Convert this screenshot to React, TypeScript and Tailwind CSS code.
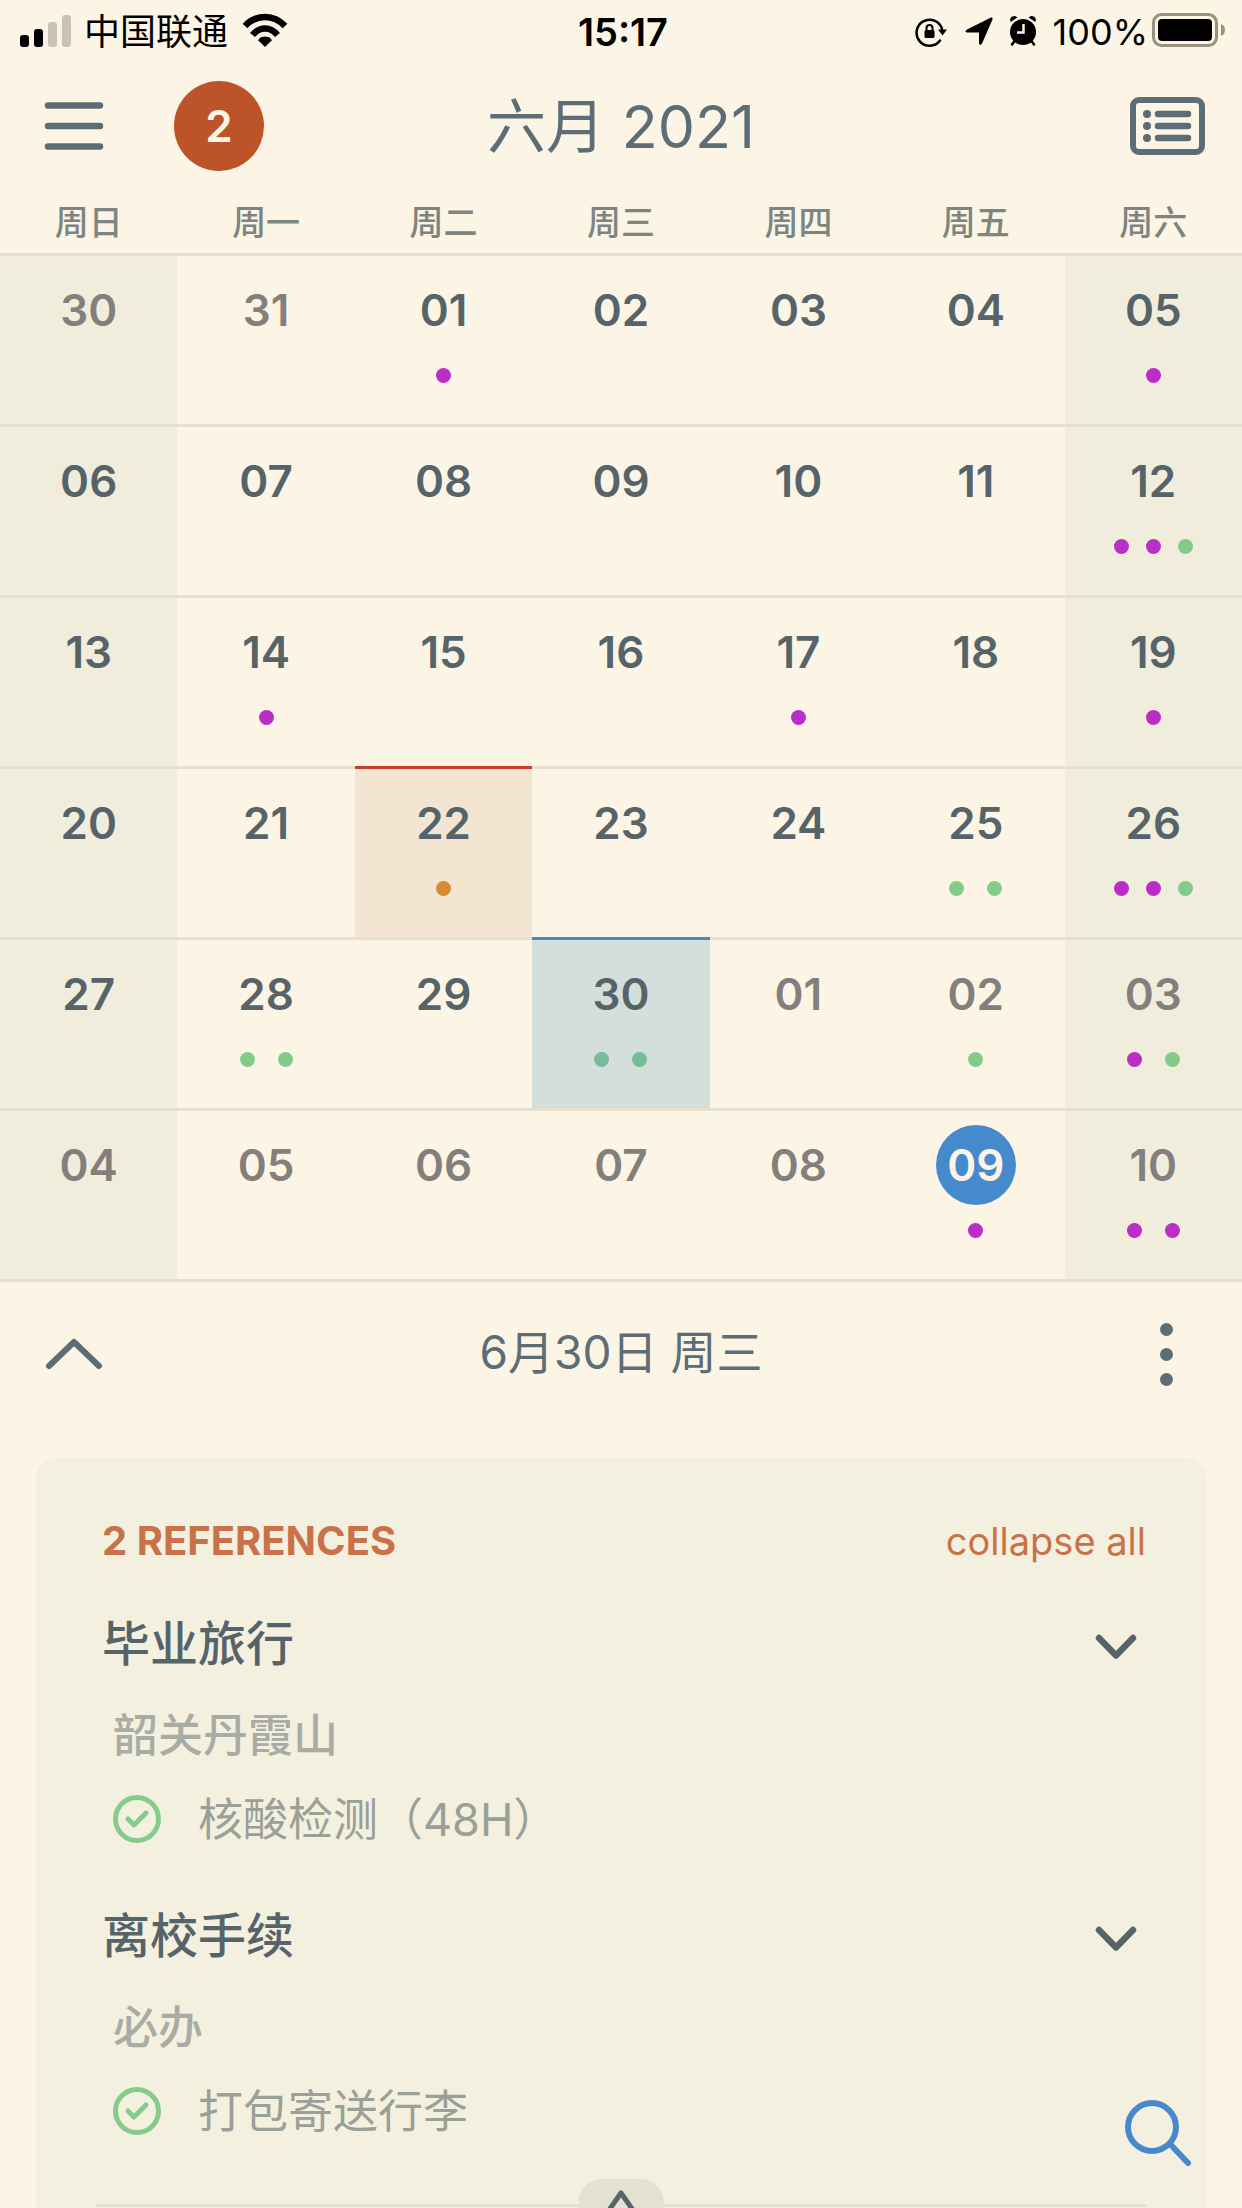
import React from "react";

type Tone = "purple" | "green" | "orange" | "teal";
type Day = { label: string; dots?: Tone[]; muted?: boolean; kind?: "today" | "selected" | "flagged" };

const dotTone: Record<Tone, string> = {
  purple: "bg-[#ba2dc7]",
  green: "bg-[#84cb89]",
  orange: "bg-[#d78a34]",
  teal: "bg-[#77bb98]",
};

const weekdays = ["周日", "周一", "周二", "周三", "周四", "周五", "周六"];

const d = (label: string, dots: Tone[] = [], extra: Partial<Day> = {}): Day => ({ label, dots, ...extra });
const m = (label: string, dots: Tone[] = [], extra: Partial<Day> = {}): Day => ({ label, dots, muted: true, ...extra });

const weeks: Day[][] = [
  [m("30"), m("31"), d("01", ["purple"]), d("02"), d("03"), d("04"), d("05", ["purple"])],
  [d("06"), d("07"), d("08"), d("09"), d("10"), d("11"), d("12", ["purple", "purple", "green"])],
  [d("13"), d("14", ["purple"]), d("15"), d("16"), d("17", ["purple"]), d("18"), d("19", ["purple"])],
  [
    d("20"),
    d("21"),
    d("22", ["orange"], { kind: "flagged" }),
    d("23"),
    d("24"),
    d("25", ["green", "green"]),
    d("26", ["purple", "purple", "green"]),
  ],
  [
    d("27"),
    d("28", ["green", "green"]),
    d("29"),
    d("30", ["teal", "teal"], { kind: "selected" }),
    m("01"),
    m("02", ["green"]),
    m("03", ["purple", "green"]),
  ],
  [m("04"), m("05"), m("06"), m("07"), m("08"), m("09", ["purple"], { kind: "today" }), m("10", ["purple", "purple"])],
];

function StatusBar() {
  return (
    <div className="grid h-16 shrink-0 grid-cols-[1fr_auto_1fr] items-center pr-4 pl-5 text-black">
      <div className="flex items-center">
        <svg className="mr-3 h-10 w-[52px]" viewBox="0 0 52 40" aria-label="signal">
          <rect x="0" y="23" width="9" height="12" rx="3" />
          <rect x="14" y="17" width="9" height="18" rx="3" />
          <rect x="28" y="10" width="9" height="25" rx="3" fill="#c9c3b5" />
          <rect x="42" y="3" width="9" height="32" rx="3" fill="#c9c3b5" />
        </svg>
        <span className="text-4xl">中国联通</span>
        <svg className="ml-3.5 h-10 w-[46px]" viewBox="0 0 46 40" aria-label="wifi">
          <path d="M23 34.500 L16.500 28 Q18 25 23 25 Q28 25 29.500 28 Z" stroke="black" strokeLinejoin="round" />
          <path d="M10.500 23 Q16 16.500 23 16.500 Q30 16.500 35.500 23" fill="none" stroke="black" strokeWidth="6.500" />
          <path d="M3 14 Q11.500 5 23 5 Q34.500 5 43 14" fill="none" stroke="black" strokeWidth="6.500" />
        </svg>
      </div>
      <span className="text-[38px] leading-none font-semibold">15:17</span>
      <div className="flex items-center justify-end">
        <svg className="mr-4 h-9 w-8" viewBox="0 0 32 36" fill="none" stroke="black" strokeWidth="2.500" aria-label="rotation lock">
          <path d="M27 15 A13 13 0 1 0 25 26.500" strokeLinecap="round" />
          <path d="M23 15.500 h9 l-4.500 6 z" fill="black" stroke="none" />
          <rect x="9.500" y="16" width="10" height="8" rx="1.500" fill="black" stroke="none" />
          <path d="M11.500 17 v-3 a3 3 0 0 1 6 0 v3" strokeWidth="2" />
        </svg>
        <svg className="mr-3.5 h-9 w-8" viewBox="0 0 32 36" aria-label="location">
          <path d="M28 3.500 Q30 3 29.500 5.500 L19 29.500 Q17 32.500 16 29 V18.500 H4 Q1 17.500 4 15.500 Z" />
        </svg>
        <svg className="mr-4 h-9 w-7" viewBox="0 0 28 36" aria-label="alarm">
          <circle cx="14" cy="18" r="13" />
          <path d="M1.500 8 Q0 2 6 2 L8.500 3.500 Z M26.500 8 Q28 2 22 2 L19.500 3.500 Z" />
          <path d="M5.500 27 L3 30.500 M22.500 27 L25 30.500" stroke="black" strokeWidth="2.500" strokeLinecap="round" />
          <path d="M14.500 10 V18.500 H8" fill="none" stroke="#fcf5e5" strokeWidth="2.500" />
        </svg>
        <span className="mr-1 text-4xl">100%</span>
        <svg className="mb-1 h-[34px] w-[74px]" viewBox="0 0 74 34" aria-label="battery">
          <rect x="1.500" y="1.500" width="63" height="31" rx="8" fill="none" stroke="#98937f" strokeWidth="3" />
          <rect x="6" y="6" width="54" height="22" rx="4" />
          <path d="M69 11 Q73 12.500 73 17 Q73 21.500 69 23 Z" fill="#98937f" />
        </svg>
      </div>
    </div>
  );
}

function Header() {
  return (
    <header className="grid h-[124px] shrink-0 grid-cols-[1fr_auto_1fr] items-center px-9 text-[#5c6d76]">
      <div className="flex items-center">
        <button aria-label="menu" className="flex w-[76px] justify-center">
          <svg className="h-12 w-[60px]" viewBox="0 0 60 48" stroke="currentColor" strokeWidth="6.500" strokeLinecap="round">
            <path d="M4 3.500 H56 M4 24 H56 M4 44.500 H56" />
          </svg>
        </button>
        <button className="ml-[62px] flex size-[90px] items-center justify-center rounded-full bg-[#bc5329] text-[44px] font-semibold text-[#fcf5e5]">
          2
        </button>
      </div>
      <h1 className="text-[59px] leading-none">六月 2021</h1>
      <button aria-label="agenda" className="justify-self-end">
        <svg className="h-[58px] w-[76px]" viewBox="0 0 76 58" fill="none" stroke="currentColor">
          <rect x="3" y="3" width="69" height="52" rx="6" strokeWidth="6" />
          <path d="M28 17 H58 M28 29 H58 M28 41 H58" strokeWidth="6.500" strokeLinecap="round" />
          <path d="M17 17 h.01 M17 29 h.01 M17 41 h.01" strokeWidth="8" strokeLinecap="round" />
        </svg>
      </button>
    </header>
  );
}

function DayCell({ day, weekend }: { day: Day; weekend: boolean }) {
  const border =
    day.kind === "flagged" ? "border-[#d23a2a]" : day.kind === "selected" ? "border-[#4a87ba]" : "border-[#e5e0cf]";
  const fill =
    day.kind === "flagged" ? "bg-[#f4e5d3]" : day.kind === "selected" ? "bg-[#d4dfdc]" : weekend ? "bg-[#f0eddc]" : "";
  const text = day.kind === "today" ? "bg-[#458acc] text-[#fcf5e5]" : day.muted ? "text-[#847f7c]" : "text-[#56646a]";
  const dots = day.dots ?? [];
  return (
    <td className={`h-[171px] border-t-[3px] p-0 align-top ${border} ${fill}`}>
      <button className="flex w-full flex-col items-center gap-[18px] pt-3.5">
        <span className={`flex size-20 items-center justify-center rounded-full text-[44px] leading-none font-semibold ${text}`}>
          {day.label}
        </span>
        <span className={`flex ${dots.length > 2 ? "gap-[17px]" : "gap-[23px]"}`}>
          {dots.map((tone, i) => (
            <i key={i} className={`size-[15px] rounded-full ${dotTone[tone]}`} />
          ))}
        </span>
      </button>
    </td>
  );
}

function Calendar() {
  return (
    <table className="w-full shrink-0 table-fixed border-separate border-spacing-0 border-b-[3px] border-[#e5e0cf]">
      <thead>
        <tr>
          {weekdays.map((name) => (
            <th key={name} className="h-[65px] px-0 pt-1 pb-0 text-[34px] leading-none font-medium text-[#7c8582]">
              {name}
            </th>
          ))}
        </tr>
      </thead>
      <tbody>
        {weeks.map((week, w) => (
          <tr key={w}>
            {week.map((day, i) => (
              <DayCell key={i} day={day} weekend={i === 0 || i === 6} />
            ))}
          </tr>
        ))}
      </tbody>
    </table>
  );
}

function DayBar() {
  return (
    <div className="grid h-44 shrink-0 grid-cols-[1fr_auto_1fr] items-start px-9 pt-10 text-[#5c6d76]">
      <button aria-label="collapse calendar" className="flex h-16 w-[76px] items-center justify-center justify-self-start">
        <svg className="h-9 w-[60px]" viewBox="0 0 60 36" fill="none" stroke="currentColor" strokeWidth="6" strokeLinecap="round" strokeLinejoin="round">
          <path d="M5 30 L30 6 L55 30" />
        </svg>
      </button>
      <h2 className="text-[46px] leading-[60px]">6月30日 周三</h2>
      <button aria-label="more" className="flex h-16 w-20 flex-col items-center justify-end gap-3 justify-self-end">
        <i className="size-[13px] rounded-full bg-current" />
        <i className="size-[13px] rounded-full bg-current" />
        <i className="size-[13px] rounded-full bg-current" />
      </button>
    </div>
  );
}

function Reference({ title, note, task }: { title: string; note: string; task: string }) {
  return (
    <article>
      <div className="flex h-[90px] items-center justify-between pr-[9px] text-[#56646a]">
        <h4 className="text-5xl font-medium">{title}</h4>
        <button aria-label={`collapse ${title}`} className="pt-1.5">
          <svg className="h-8 w-[42px]" viewBox="0 0 42 32" fill="none" stroke="currentColor" strokeWidth="6.500" strokeLinecap="round" strokeLinejoin="round">
            <path d="M4 7 L21 24.500 L38 7" />
          </svg>
        </button>
      </div>
      <p className="flex h-[92px] items-center pl-[11px] text-[45px] leading-none font-medium text-[#a8aca4]">{note}</p>
      <div className="flex h-[90px] items-start pl-[10px]">
        <div className="flex h-[76px] items-center">
          <svg className="mr-9 size-[50px]" viewBox="0 0 50 50" fill="none" stroke="#85cc8c" strokeWidth="5" role="img" aria-label="done">
            <circle cx="25" cy="25" r="21.500" />
            <path d="M16 25 L22 31 L34 19" strokeLinecap="round" strokeLinejoin="round" />
          </svg>
          <span className="text-[45px] leading-none text-[#9a9f98]">{task}</span>
        </div>
      </div>
    </article>
  );
}

export default function App() {
  return (
    <div className="relative flex h-screen flex-col overflow-hidden bg-[#fcf5e5] font-['Inter','Noto_Sans_CJK_SC',sans-serif]">
      <StatusBar />
      <Header />
      <Calendar />
      <DayBar />
      <section className="mx-9 grow rounded-t-[20px] bg-[#f4f0df] pt-[46px]">
        <div className="flex h-[74px] items-center justify-between pr-[60px] pl-[66px] leading-none text-[#c9724a]">
          <h3 className="text-[40px] font-bold">2 REFERENCES</h3>
          <button className="text-[38px]">collapse all</button>
        </div>
        <div className="flex flex-col gap-5 pt-[21px] pr-[60px] pl-[66px]">
          <Reference title="毕业旅行" note="韶关丹霞山" task="核酸检测（48H）" />
          <Reference title="离校手续" note="必办" task="打包寄送行李" />
        </div>
        <div className="mx-[60px] mt-4 flex items-center">
          <span className="h-[3px] grow bg-[#e4e1d0]" />
          <button aria-label="expand panel" className="flex h-[52px] w-[86px] justify-center rounded-[24px] bg-[#e3e1d2] text-[#56646a]">
            <svg className="h-12 w-10" viewBox="0 0 40 48" fill="none" stroke="currentColor" strokeWidth="5">
              <path d="M6 34 L20 14 L34 34" strokeLinejoin="round" />
            </svg>
          </button>
          <span className="h-[3px] grow bg-[#e4e1d0]" />
        </div>
      </section>
      <button aria-label="search" className="absolute right-12 bottom-9">
        <svg className="size-[72px]" viewBox="0 0 72 72" fill="none" stroke="#468acb" strokeWidth="6" strokeLinecap="round">
          <circle cx="30" cy="27" r="24" />
          <path d="M48 44 L66 63" />
        </svg>
      </button>
    </div>
  );
}
